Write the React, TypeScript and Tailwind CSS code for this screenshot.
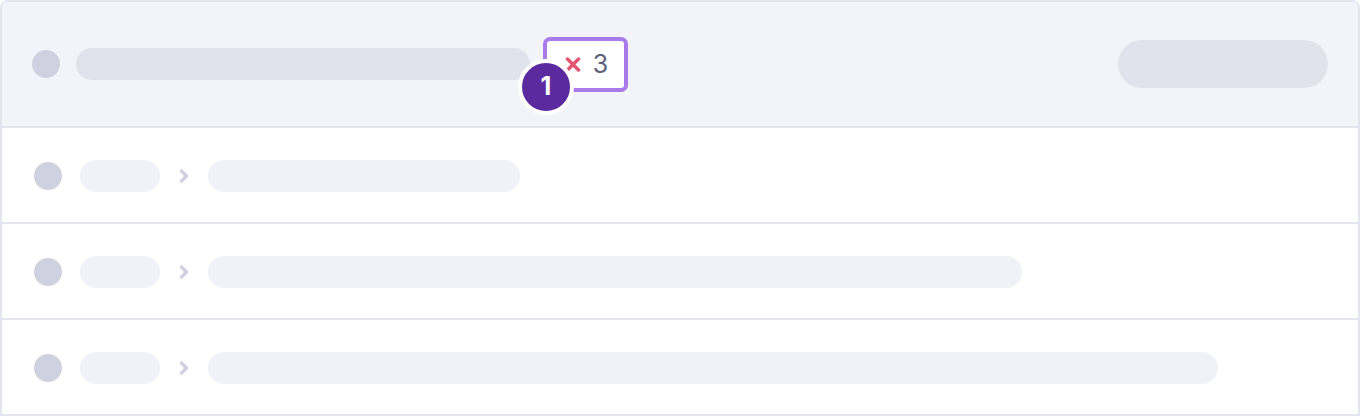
import React from 'react';

const Chevron: React.FC = () => (
  <svg width="12" height="16" viewBox="0 0 12 16" className="shrink-0">
    <path d="M3.5 3L8.5 8L3.5 13" fill="none" stroke="#d0d0df" strokeWidth="3.5" strokeLinecap="round" strokeLinejoin="round" />
  </svg>
);

const Row: React.FC<{ width: number; last?: boolean }> = ({ width, last }) => (
  <div className={`flex items-center pl-[32px] pt-[2px] bg-white ${last ? 'flex-1' : 'h-[96px] shrink-0 border-b-2 border-[#e3e4ee]'}`}>
    <div className="w-[28px] h-[28px] rounded-full bg-[#d0d1e0] shrink-0" />
    <div className="ml-[18px] w-[80px] h-[32px] rounded-full bg-[#f1f2f8] shrink-0" />
    <div className="ml-[18px]">
      <Chevron />
    </div>
    <div className="ml-[18px] h-[32px] rounded-full bg-[#f1f2f8] shrink-0" style={{ width }} />
  </div>
);

export default function App() {
  return (
    <div className="w-[1360px] h-[416px] bg-white" style={{ fontFamily: 'Inter, "Noto Sans", sans-serif' }}>
      <div className="h-full border-2 border-[#e3e4ee] rounded-t-[8px] overflow-hidden flex flex-col">
        <div className="h-[126px] shrink-0 flex items-center pl-[30px] pr-[30px] bg-[#f3f4f9] border-b-2 border-[#e3e4ee]">
          <div className="w-[28px] h-[28px] rounded-full bg-[#d0d1e0] shrink-0" />
          <div className="ml-[16px] w-[454px] h-[32px] rounded-full bg-[#e1e3ec] shrink-0" />
          <div className="relative ml-[13px]">
            <div className="w-[85px] h-[55px] rounded-[7px] border-[4px] border-[#a87aea] bg-white flex items-center justify-center gap-[12px] pl-[2px]">
              <svg width="16" height="15" viewBox="0 0 16 15">
                <path d="M2.5 2L13.5 13M13.5 2L2.5 13" stroke="#e25471" strokeWidth="3.5" strokeLinecap="round" />
              </svg>
              <span className="text-[25px] leading-none text-[#5c6179]">3</span>
            </div>
            <div className="absolute left-[-25px] top-[22px] w-[56px] h-[56px] rounded-full bg-[#5b2a9f] border-[4px] border-white flex items-center justify-center">
              <span className="text-[25px] font-bold leading-none text-white">1</span>
            </div>
          </div>
          <div className="ml-auto w-[210px] h-[48px] rounded-full bg-[#e1e3ec]" />
        </div>
        <Row width={312} />
        <Row width={814} />
        <Row width={1010} last />
      </div>
    </div>
  );
}
